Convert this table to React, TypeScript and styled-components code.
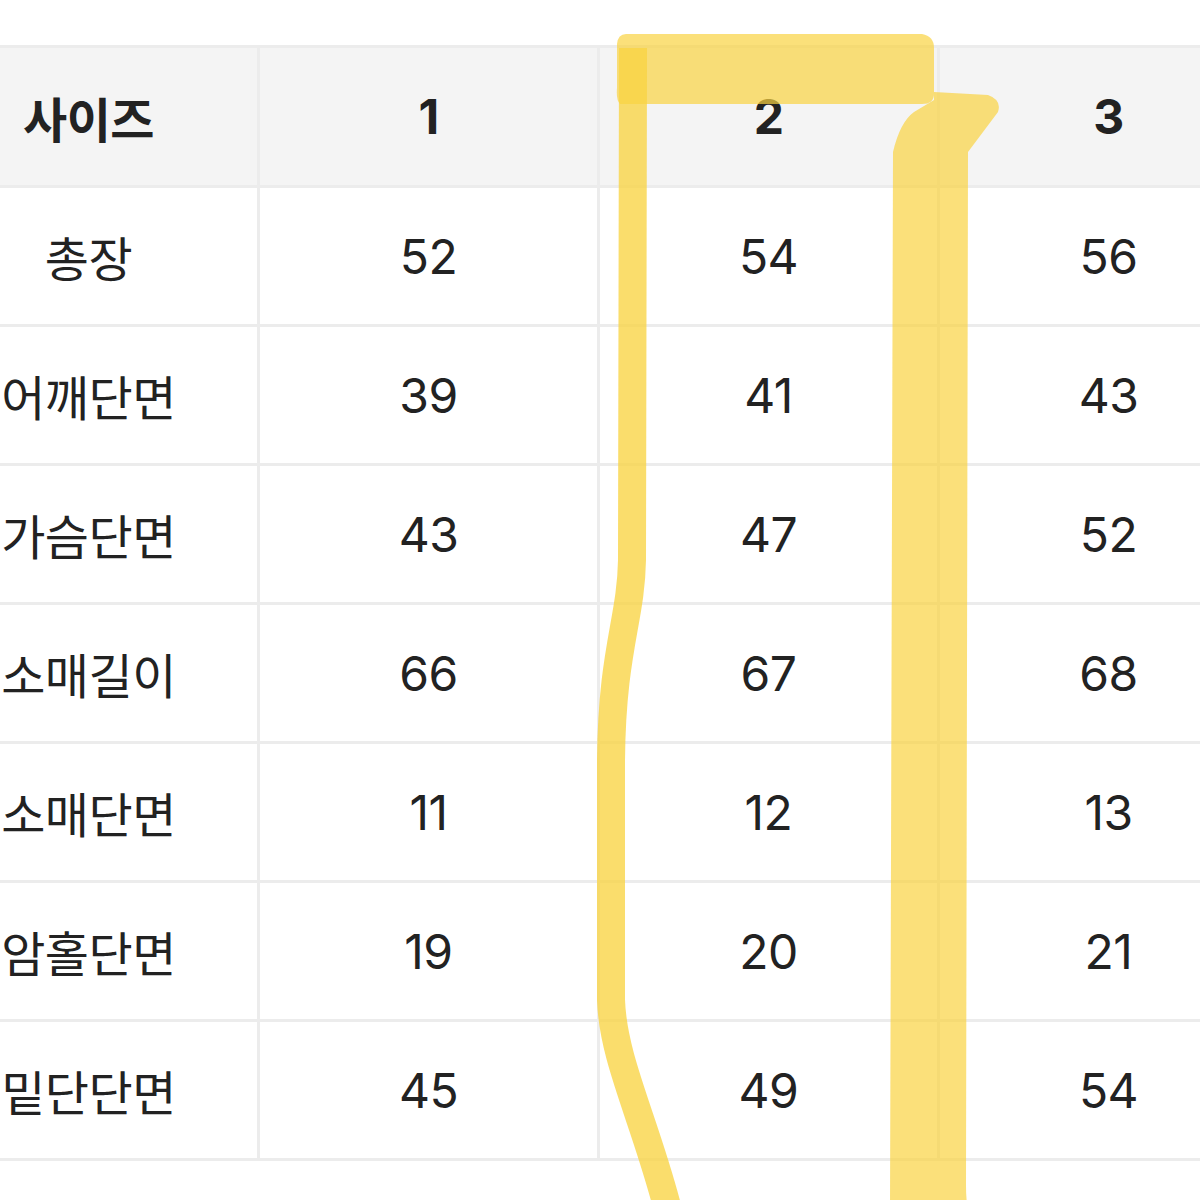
import React from "react";
import styled, { createGlobalStyle } from "styled-components";

const Global = createGlobalStyle`
  html, body { margin: 0; padding: 0; background: #ffffff; }
  body { font-family: "Inter", "Noto Sans CJK KR", sans-serif; }
`;

const Page = styled.div`
  position: relative;
  width: 1200px;
  height: 1200px;
  overflow: hidden;
  background: #ffffff;
  padding-top: 45px;
  box-sizing: border-box;
`;

const Grid = styled.div`
  display: grid;
  grid-template-columns: repeat(4, 337px);
  grid-auto-rows: 136px;
  grid-template-rows: 137px;
  gap: 3px;
  padding: 3px 0;
  margin-left: -80px;
  width: 1357px;
  background: #ececec;
`;

const Cell = styled.div<{ $head?: boolean }>`
  display: flex;
  align-items: center;
  justify-content: center;
  background: ${(p) => (p.$head ? "#f4f4f4" : "#ffffff")};
  color: #222222;
  font-family: "Inter", "Noto Sans CJK KR", sans-serif;
  font-size: 48px;
  font-weight: ${(p) => (p.$head ? 700 : 400)};
  letter-spacing: -0.5px;
`;

const Highlight = styled.svg`
  position: absolute;
  left: 0;
  top: 0;
  width: 1200px;
  height: 1200px;
  pointer-events: none;
`;

const header = ["사이즈", "1", "2", "3"];
const rows: [string, string, string, string][] = [
  ["총장", "52", "54", "56"],
  ["어깨단면", "39", "41", "43"],
  ["가슴단면", "43", "47", "52"],
  ["소매길이", "66", "67", "68"],
  ["소매단면", "11", "12", "13"],
  ["암홀단면", "19", "20", "21"],
  ["밑단단면", "45", "49", "54"],
];

export default function App() {
  return (
    <>
      <Global />
      <Page>
        <Grid>
          {header.map((h) => (
            <Cell key={h} $head>
              {h}
            </Cell>
          ))}
          {rows.map((r) =>
            r.map((c, i) => <Cell key={r[0] + i}>{c}</Cell>)
          )}
        </Grid>
        <Highlight viewBox="0 0 1200 1200">
          <g fill="rgba(249, 211, 66, 0.7)">
            <path d="M626,34 L922,34 Q934,36 934,48 L934,94 Q934,104 922,104 L640,104 L620,104 Q616,100 617,88 L617,44 Q618,34 626,34 Z" />
            <path d="M934,92 L988,95 Q1002,100 998,112 L968,152 L966,1185 Q966,1200 968,1210 L890,1210 L893,152 Q900,122 914,112 L934,100 Z" />
          </g>
          <path
            d="M633,48 L632,560 C631,620 612,650 611,760 L611,1000 C613,1060 645,1120 668,1210"
            fill="none"
            stroke="rgba(249, 211, 66, 0.78)"
            strokeWidth="28"
            strokeLinecap="butt"
          />
        </Highlight>
      </Page>
    </>
  );
}
